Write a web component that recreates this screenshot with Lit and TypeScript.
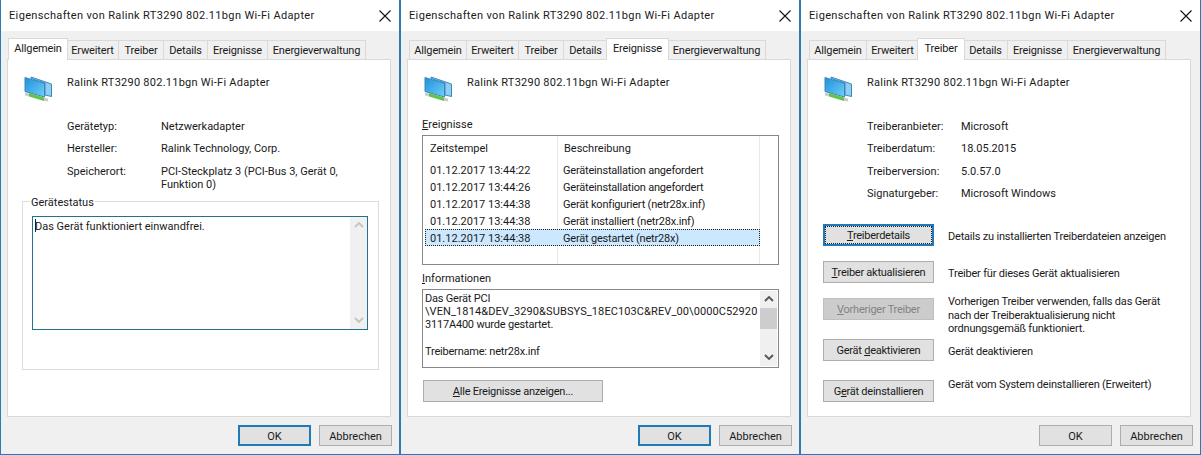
import {LitElement, html, css, svg} from 'lit';
import {customElement} from 'lit/decorators.js';

const TABS = [
  {name: 'Allgemein', w: 58},
  {name: 'Erweitert', w: 53},
  {name: 'Treiber', w: 46},
  {name: 'Details', w: 45},
  {name: 'Ereignisse', w: 61},
  {name: 'Energieverwaltung', w: 99},
];

const EVENTS = [
  ['01.12.2017 13:44:22', 'Geräteinstallation angefordert'],
  ['01.12.2017 13:44:26', 'Geräteinstallation angefordert'],
  ['01.12.2017 13:44:38', 'Gerät konfiguriert (netr28x.inf)'],
  ['01.12.2017 13:44:38', 'Gerät installiert (netr28x.inf)'],
  ['01.12.2017 13:44:38', 'Gerät gestartet (netr28x)'],
];

const chevronUp = svg`<path d="M1 6 L5 2 L9 6" fill="none" stroke="currentColor" stroke-width="1.8"/>`;
const chevronDown = svg`<path d="M1 2 L5 6 L9 2" fill="none" stroke="currentColor" stroke-width="1.8"/>`;

@customElement('app-root')
export class AppRoot extends LitElement {
  static override styles = css`
    :host {
      display: grid;
      grid-template-columns: 400px 400px 401px;
      width: 1201px;
      height: 455px;
      font-family: Roboto, 'Liberation Sans', sans-serif;
      font-size: 11px;
      line-height: 13px;
      color: #1a1a1a;
      overflow: hidden;
    }
    u { text-underline-offset: 1px; }

    .window {
      display: flex;
      flex-direction: column;
      height: 455px;
      box-sizing: border-box;
      background: #f0f0f0;
      border: 1px solid #2a7ab8;
      border-top: none;
    }
    .titlebar {
      display: flex;
      align-items: center;
      justify-content: space-between;
      height: 31px;
      flex: none;
      padding: 0 8px;
      background: #fff;
      letter-spacing: 0.35px;
    }
    .close { width: 12px; height: 12px; color: #111; }

    .tabs {
      display: flex;
      align-items: flex-end;
      height: 28px;
      flex: none;
      padding-left: 8px;
    }
    .tab {
      box-sizing: border-box;
      height: 19px;
      margin-right: -1px;
      padding-top: 3px;
      text-align: center;
      letter-spacing: -0.15px;
      border: 1px solid #d9d9d9;
      border-bottom: none;
      background: #f0f0f0;
    }
    .tab.active {
      position: relative;
      z-index: 1;
      height: 22px;
      margin: 0 -2px -1px -1px;
      padding-top: 3px;
      background: #fff;
    }

    .panel {
      box-sizing: border-box;
      width: 384px;
      height: 358px;
      flex: none;
      margin-left: 6px;
      padding-left: 14px;
      background: #fff;
      border: 1px solid #d9d9d9;
    }
    .head {
      display: flex;
      height: 42px;
      padding: 14px 0 0 2px;
      box-sizing: border-box;
    }
    .head svg { width: 28px; height: 26px; margin: 2px 15px 0 0; flex: none; }
    .head span { padding-top: 1px; line-height: 16px; letter-spacing: 0.25px; }

    .info {
      display: grid;
      grid-template-columns: 94px 1fr;
      row-gap: 9.6px;
      padding: 17.6px 0 0 45px;
    }

    fieldset {
      box-sizing: border-box;
      width: 357px;
      height: 175.5px;
      margin: 4.2px 0 0;
      padding: 7.5px 10px 0 9px;
      border: 1px solid #dcdcdc;
    }
    legend { margin-left: -2px; padding: 1px 1px 0; line-height: 13px; }
    .status {
      display: flex;
      box-sizing: border-box;
      height: 114px;
      border: 1px solid #23708f;
    }
    .status-text { flex: 1; padding: 2px 0 0 2px; }
    .caret { display: inline-block; width: 1px; height: 13px; margin-right: -1px; background: #123; vertical-align: -2px; }

    .scrollbar {
      display: flex;
      flex-direction: column;
      align-items: center;
      justify-content: space-between;
      width: 17px;
      flex: none;
      background: #f0f0f0;
      color: #555;
    }
    .scrollbar.off { color: #c4c4c4; }
    .scrollbar svg { width: 10px; height: 8px; margin: 4px 0 5px; flex: none; }
    .scrollbar .track { flex: 1; width: 100%; }
    .scrollbar .thumb { height: 21px; width: 100%; background: #cdcdcd; }

    .label { margin-top: 15.5px; line-height: 13px; }
    .list {
      display: flex;
      flex-direction: column;
      box-sizing: border-box;
      width: 357px;
      height: 130px;
      margin-top: 4px;
      padding-left: 2px;
      border: 1px solid #888;
    }
    .row {
      display: grid;
      grid-template-columns: 133px 202px;
      grid-template-rows: 17px;
      width: 335px;
      height: 17px;
      flex: none;
      box-sizing: border-box;
      line-height: 19px;
    }
    .cell { border-right: 1px solid #eaeaea; padding-left: 5px; white-space: nowrap; }
    .cell + .cell { letter-spacing: -0.2px; }
    .row.header { height: 25px; grid-template-rows: 25px; line-height: 13px; }
    .row.header .cell { padding-top: 6px; letter-spacing: 0; }
    .row.header .cell + .cell { padding-left: 6px; }
    .row.selected { background: #cce8ff; outline: 1px dotted #222; outline-offset: -1px; }
    .row.selected .cell { border-right-color: transparent; }
    .row.filler { flex: 1; grid-template-rows: 1fr; }

    .list + .label { margin-top: 7px; }
    .details {
      display: flex;
      box-sizing: border-box;
      width: 357px;
      height: 79px;
      margin-top: 4px;
      padding: 1px 1px 1px 2px;
      border: 1px solid #888;
    }
    .details-text { flex: 1; padding-top: 1px; line-height: 13.4px; white-space: nowrap; letter-spacing: -0.2px; }
    .details-text .long { letter-spacing: 0.1px; }

    .btn {
      box-sizing: border-box;
      display: flex;
      align-items: center;
      justify-content: center;
      height: 22px;
      flex: none;
      padding-top: 1px;
      letter-spacing: -0.25px;
      background: #e1e1e1;
      border: 1px solid #adadad;
      white-space: nowrap;
    }
    .btn.default { border: 2px solid #2079b8; }
    .btn.focus { outline: 1px dotted #222; outline-offset: -3px; }
    .btn.disabled { background: #cccccc; border-color: #bfbfbf; color: #838383; }
    .all { width: 180px; margin: 12px 0 0 1px; }

    .actions { padding: 8.6px 0 0 1px; }
    .action { display: flex; height: 22px; margin-top: 15px; }
    .action.gap { margin-top: 19px; }
    .action .btn { width: 111px; }
    .action p { margin: 6.5px 0 0 14px; line-height: 13.4px; letter-spacing: -0.2px; white-space: nowrap; }
    .action p.tall { margin-top: -2.5px; }
    .action p.high { margin-top: -1.5px; }

    .footer {
      display: flex;
      justify-content: flex-end;
      gap: 8px;
      padding: 8px 7px 0 0;
    }
    .footer .btn { width: 73px; height: 21px; letter-spacing: 0; }
  `;

  private icon() {
    return html`<svg viewBox="0 0 28 26" aria-hidden="true">
      <defs>
        <linearGradient id="scr" x1="0" y1="0" x2="1" y2="1">
          <stop offset="0" stop-color="#1f8fdc" />
          <stop offset="1" stop-color="#6fd0f7" />
        </linearGradient>
      </defs>
      <path d="M7 1 L27.5 8 V20.5 L21 19 V7 L7 2.5 Z" fill="#8fd0f2" stroke="#3b87bd" stroke-width="1" />
      <path d="M1 1.5 L20.5 7.5 V21 L1 15.5 Z" fill="url(#scr)" stroke="#3b87bd" stroke-width="1" />
      <path d="M5 17 L20 21.5 V25 L5 20.5 Z" fill="#62c24c" />
      <path d="M1 16.5 L5 17.5 V20.5 L1 19.5 Z M20 21.5 L24 22.5 V25.5 L20 25 Z" fill="#c8ced2" />
    </svg>`;
  }

  private dialog(active: number, body: unknown, okDefault: boolean) {
    return html`<section class="window">
      <div class="titlebar">
        <span>Eigenschaften von Ralink RT3290 802.11bgn Wi-Fi Adapter</span>
        <svg class="close" viewBox="0 0 12 12"><path d="M0.5 0.5 L11.5 11.5 M11.5 0.5 L0.5 11.5" stroke="currentColor" stroke-width="1.1" /></svg>
      </div>
      <div class="tabs">
        ${TABS.map((t, i) => html`<div class="tab ${i === active ? 'active' : ''}" style="width:${t.w + (i === active ? 2 : 0)}px">${t.name}</div>`)}
      </div>
      <div class="panel">
        <div class="head">${this.icon()}<span>Ralink RT3290 802.11bgn Wi-Fi Adapter</span></div>
        ${body}
      </div>
      <div class="footer">
        <div class="btn ${okDefault ? 'default' : ''}">OK</div>
        <div class="btn">Abbrechen</div>
      </div>
    </section>`;
  }

  private general() {
    return html`<div class="info">
        <span>Gerätetyp:</span><span>Netzwerkadapter</span>
        <span>Hersteller:</span><span>Ralink Technology, Corp.</span>
        <span>Speicherort:</span><span>PCI-Steckplatz 3 (PCI-Bus 3, Gerät 0,<br />Funktion 0)</span>
      </div>
      <fieldset>
        <legend>Gerätestatus</legend>
        <div class="status">
          <div class="status-text"><span class="caret"></span>Das Gerät funktioniert einwandfrei.</div>
          <div class="scrollbar off">
            <svg viewBox="0 0 10 8">${chevronUp}</svg>
            <svg viewBox="0 0 10 8">${chevronDown}</svg>
          </div>
        </div>
      </fieldset>`;
  }

  private events() {
    return html`<div class="label"><u>E</u>reignisse</div>
      <div class="list">
        <div class="row header"><div class="cell">Zeitstempel</div><div class="cell">Beschreibung</div></div>
        ${EVENTS.map((e, i) => html`<div class="row ${i === EVENTS.length - 1 ? 'selected' : ''}">
          <div class="cell">${e[0]}</div><div class="cell">${e[1]}</div>
        </div>`)}
        <div class="row filler"><div class="cell"></div><div class="cell"></div></div>
      </div>
      <div class="label"><u>I</u>nformationen</div>
      <div class="details">
        <div class="details-text">
          Das Gerät PCI<br />
          <span class="long">\\VEN_1814&amp;DEV_3290&amp;SUBSYS_18EC103C&amp;REV_00\\0000C52920</span><br />
          3117A400 wurde gestartet.<br /><br />
          Treibername: netr28x.inf
        </div>
        <div class="scrollbar">
          <svg viewBox="0 0 10 8">${chevronUp}</svg>
          <div class="thumb"></div>
          <div class="track"></div>
          <svg viewBox="0 0 10 8">${chevronDown}</svg>
        </div>
      </div>
      <div class="btn all"><span><u>A</u>lle Ereignisse anzeigen...</span></div>`;
  }

  private driver() {
    return html`<div class="info">
        <span>Treiberanbieter:</span><span>Microsoft</span>
        <span>Treiberdatum:</span><span>18.05.2015</span>
        <span>Treiberversion:</span><span>5.0.57.0</span>
        <span>Signaturgeber:</span><span>Microsoft Windows</span>
      </div>
      <div class="actions">
        <div class="action">
          <div class="btn default focus"><span><u>T</u>reiberdetails</span></div>
          <p>Details zu installierten Treiberdateien anzeigen</p>
        </div>
        <div class="action">
          <div class="btn"><span><u>T</u>reiber aktualisieren</span></div>
          <p>Treiber für dieses Gerät aktualisieren</p>
        </div>
        <div class="action">
          <div class="btn disabled"><span><u>V</u>orheriger Treiber</span></div>
          <p class="tall">Vorherigen Treiber verwenden, falls das Gerät<br />nach der Treiberaktualisierung nicht<br />ordnungsgemäß funktioniert.</p>
        </div>
        <div class="action gap">
          <div class="btn"><span>Gerät <u>d</u>eaktivieren</span></div>
          <p>Gerät deaktivieren</p>
        </div>
        <div class="action gap">
          <div class="btn"><span>G<u>e</u>rät deinstallieren</span></div>
          <p class="high">Gerät vom System deinstallieren (Erweitert)</p>
        </div>
      </div>`;
  }

  protected override render() {
    return html`
      ${this.dialog(0, this.general(), true)}
      ${this.dialog(4, this.events(), true)}
      ${this.dialog(2, this.driver(), false)}
    `;
  }
}

declare global {
  interface HTMLElementTagNameMap {
    'app-root': AppRoot;
  }
}
